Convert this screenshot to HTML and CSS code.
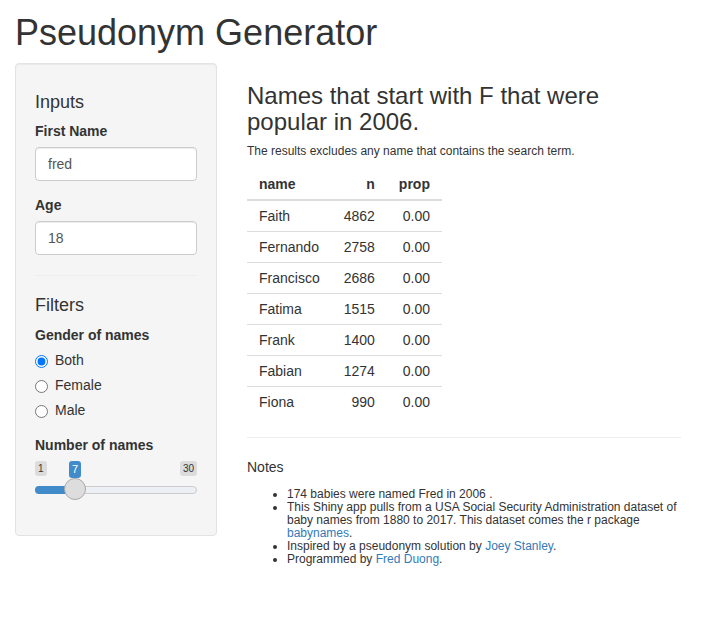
FILE: index.html
```html
<!DOCTYPE html>
<html lang="en">
<head>
<meta charset="utf-8">
<title>Pseudonym Generator</title>
<link rel="stylesheet" href="styles.css">
</head>
<body>
<div class="page">
  <h1 class="title">Pseudonym Generator</h1>
  <div class="layout">
    <div class="well">
      <h4 class="section-title">Inputs</h4>
      <div class="form-group">
        <label class="control-label" for="fname">First Name</label>
        <input class="form-control" id="fname" type="text" value="fred">
      </div>
      <div class="form-group">
        <label class="control-label" for="age">Age</label>
        <input class="form-control" id="age" type="text" value="18">
      </div>
      <hr class="divider">
      <h4 class="section-title">Filters</h4>
      <div class="form-group">
        <label class="control-label">Gender of names</label>
        <div class="radio-list">
          <label class="radio"><input type="radio" name="gender" checked><span>Both</span></label>
          <label class="radio"><input type="radio" name="gender"><span>Female</span></label>
          <label class="radio"><input type="radio" name="gender"><span>Male</span></label>
        </div>
      </div>
      <div class="form-group">
        <label class="control-label">Number of names</label>
        <div class="slider">
          <div class="slider-labels">
            <span class="irs-min">1</span>
            <span class="irs-max">30</span>
          </div>
          <span class="irs-single" style="left:34px">7</span>
          <div class="irs-line"><div class="irs-bar" style="width:40px"></div></div>
          <span class="irs-handle" style="left:29px"></span>
        </div>
      </div>
    </div>
    <div class="main">
      <h3 class="results-title">Names that start with F that were popular in 2006.</h3>
      <h6 class="results-note">The results excludes any name that contains the search term.</h6>
      <table class="table">
        <thead>
          <tr><th class="left">name</th><th class="right">n</th><th class="right">prop</th></tr>
        </thead>
        <tbody>
          <tr><td>Faith</td><td class="right">4862</td><td class="right">0.00</td></tr>
          <tr><td>Fernando</td><td class="right">2758</td><td class="right">0.00</td></tr>
          <tr><td>Francisco</td><td class="right">2686</td><td class="right">0.00</td></tr>
          <tr><td>Fatima</td><td class="right">1515</td><td class="right">0.00</td></tr>
          <tr><td>Frank</td><td class="right">1400</td><td class="right">0.00</td></tr>
          <tr><td>Fabian</td><td class="right">1274</td><td class="right">0.00</td></tr>
          <tr><td>Fiona</td><td class="right">990</td><td class="right">0.00</td></tr>
        </tbody>
      </table>
      <hr class="rule">
      <p class="notes-title">Notes</p>
      <ul class="notes">
        <li>174 babies were named Fred in 2006 .</li>
        <li>This Shiny app pulls from a USA Social Security Administration dataset of baby names from 1880 to 2017. This dataset comes the r package <a href="#">babynames</a>.</li>
        <li>Inspired by a pseudonym solution by <a href="#">Joey Stanley</a>.</li>
        <li>Programmed by <a href="#">Fred Duong</a>.</li>
      </ul>
    </div>
  </div>
</div>
</body>
</html>
```
FILE: styles.css
```css
* { box-sizing: border-box; }

body {
  margin: 0;
  font-family: "Liberation Sans", Arial, Helvetica, sans-serif;
  font-size: 14px;
  line-height: 1.42857;
  color: #333;
  background: #fff;
}

.page { padding: 0 15px; }

.title {
  font-size: 36px;
  font-weight: 500;
  line-height: 1.1;
  margin: 13px 0 10px;
}

.layout {
  display: flex;
  align-items: flex-start;
  gap: 30px;
}

.well {
  width: 202px;
  flex: none;
  background: #f5f5f5;
  border: 1px solid #e3e3e3;
  border-radius: 4px;
  box-shadow: inset 0 1px 1px rgba(0, 0, 0, .05);
  padding: 19px;
}

.section-title {
  font-size: 18px;
  font-weight: 500;
  line-height: 1.1;
  margin: 10px 0;
}

.form-group { margin-bottom: 15px; }

.control-label {
  display: block;
  font-weight: 700;
  margin-bottom: 5px;
}

.form-control {
  display: block;
  width: 100%;
  height: 34px;
  padding: 6px 12px;
  font-family: inherit;
  font-size: 14px;
  line-height: 1.42857;
  color: #555;
  background: #fff;
  border: 1px solid #ccc;
  border-radius: 4px;
  box-shadow: inset 0 1px 1px rgba(0, 0, 0, .075);
}

.divider {
  border: 0;
  border-top: 1px solid #eee;
  margin: 20px 0;
}

.radio-list {
  display: flex;
  flex-direction: column;
  gap: 5px;
}

.radio {
  display: flex;
  align-items: center;
  height: 20px;
  font-weight: 400;
}

.radio input {
  width: 13px;
  height: 13px;
  margin: 0 7px 0 0;
}

.slider {
  position: relative;
  height: 40px;
}

.slider-labels {
  display: flex;
  justify-content: space-between;
  align-items: flex-start;
  height: 25px;
}

.irs-min, .irs-max {
  font-size: 10px;
  line-height: 1.333;
  padding: 1px 3px;
  color: #333;
  background: rgba(0, 0, 0, .1);
  border-radius: 3px;
}

.irs-single {
  position: absolute;
  top: 0;
  font-size: 11px;
  line-height: 1.333;
  padding: 1px 3px;
  color: #fff;
  background: #428bca;
  border-radius: 3px;
}

.irs-line {
  height: 8px;
  border: 1px solid #ccc;
  background: #eceff3;
  border-radius: 16px;
}

.irs-bar {
  height: 8px;
  margin: -1px 0 0 -1px;
  background: #428bca;
  border-radius: 16px 0 0 16px;
}

.irs-handle {
  position: absolute;
  top: 17px;
  width: 22px;
  height: 22px;
  border: 1px solid #aaa;
  background: #ddd;
  border-radius: 50%;
}

.main {
  width: 434px;
  flex: none;
}

.results-title {
  font-size: 24px;
  font-weight: 500;
  line-height: 1.1;
  margin: 20px 0 10px;
}

.results-note {
  font-size: 12px;
  font-weight: 500;
  line-height: 1.1;
  margin: 10px 0;
}

.table {
  border-collapse: collapse;
  border-spacing: 0;
  margin-bottom: 20px;
}

.table th, .table td {
  padding: 5px 12px;
  line-height: 20px;
}

.table th {
  font-weight: 700;
  border-bottom: 2px solid #ddd;
}

.table td { border-top: 1px solid #ddd; }

.left { text-align: left; }
.right { text-align: right; }

.rule {
  border: 0;
  border-top: 1px solid #eee;
  margin: 20px 0;
}

.notes-title { margin: 0 0 10px; }

.notes {
  font-size: 12px;
  line-height: 1.1;
  margin: 0 0 10px;
  padding-left: 40px;
}

.notes a {
  color: #337ab7;
  text-decoration: none;
}
```
